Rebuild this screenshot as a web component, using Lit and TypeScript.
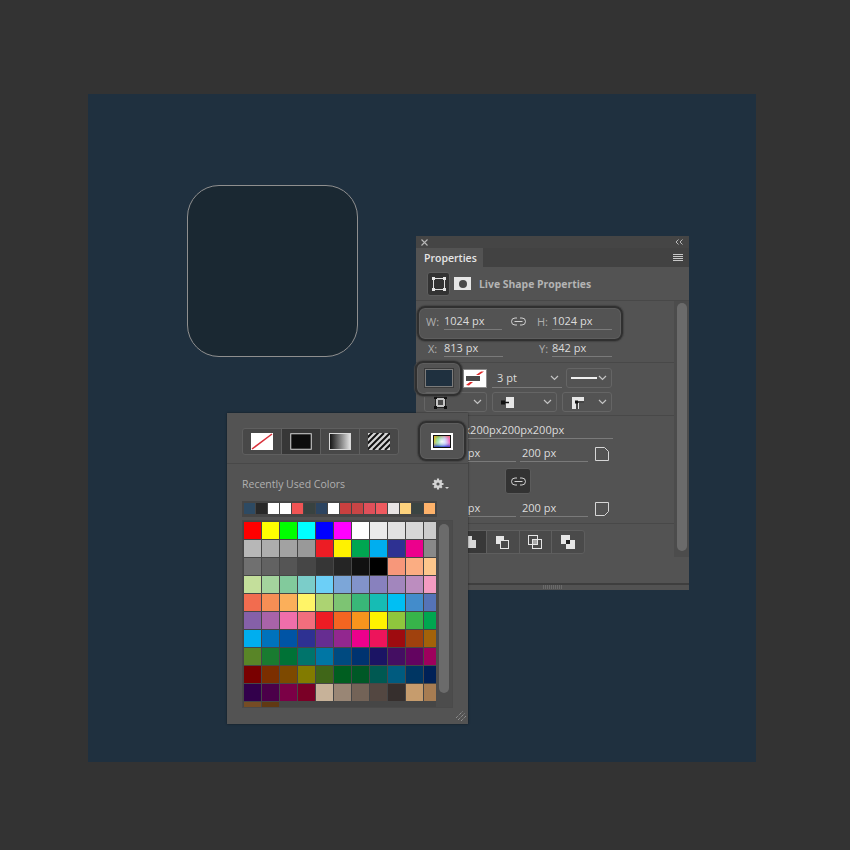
import { LitElement, html, css, svg } from "lit";
import { customElement } from "lit/decorators.js";

const RECENT = ["#2d4a63","#282828","#ffffff","#ffffff","#f05454","#384240","#2c4460","#ffffff","#c9403f","#c84545","#e0505a","#ef5a5f","#e8e4e4","#fdd27d","#3a4442","#feb26a"];
const GRID = [
"#ff0000 #ffff00 #00ff00 #00ffff #0000ff #ff00ff #ffffff #ebebeb #e1e1e1 #d7d7d7 #cccccc",
"#b7b7b7 #adadad #a2a2a2 #999999 #ed1c24 #fff200 #00a651 #00aeef #2e3192 #ec008c #898989",
"#707070 #626262 #555555 #464646 #363636 #252525 #111111 #000000 #f7977a #fbad82 #fdc68c",
"#c4df9b #a4d49d #82ca9c #7bcdc9 #6ccff7 #7ca6d8 #8293ca #8881be #a286bd #bc8dbf #f49bc1",
"#f26c4f #f68e55 #fbaf5a #fff467 #acd372 #7dc473 #39b778 #16bcb4 #00bff3 #438ccb #5573b7",
"#8560a8 #a863a8 #f06eaa #f26e7d #ed1c24 #f36521 #f7941d #fff200 #8fc63d #37b44a #00a650",
"#00aeef #0072bc #0054a5 #2e3192 #662d91 #92278f #ec008c #ed145b #9e0b0f #a0410d #a36209",
"#598527 #197b30 #007236 #00746b #0076a4 #004a80 #003370 #1b1464 #440e62 #630460 #9e005d",
"#790000 #7b2e00 #7d4900 #827b00 #406618 #005e20 #005826 #005952 #005b7f #003663 #002157",
"#32004b #4b0049 #7b0046 #7a0026 #c7b299 #998675 #736357 #534741 #362f2d #c69c6d #a67c52",
"#754c24 #603913",
].join(" ").split(" ");

const chevron = html`<svg class="chev" width="9" height="6" viewBox="0 0 9 6"><path d="M1 1l3.5 3.5L8 1" fill="none" stroke="#c4c4c4" stroke-width="1.2"/></svg>`;
const link = html`<svg width="15" height="9" viewBox="0 0 15 9"><g fill="none" stroke="#d0d0d0" stroke-width="1"><path d="M6 1H4a3.4 3.4 0 0 0 0 7h2M9 1h2a3.4 3.4 0 0 1 0 7H9"/><path d="M3.500 4.500h8"/></g></svg>`;

@customElement("app-root")
export class AppRoot extends LitElement {
  static styles = css`
    :host { display: block; width: 850px; height: 850px; background: #333333; font-family: "Open Sans", "Liberation Sans", sans-serif; font-size: 11px; color: #d4d4d4; overflow: hidden; }
    .stage { box-sizing: border-box; width: 850px; height: 850px; padding: 94px 94px 88px 88px; }
    .canvas { position: relative; width: 668px; height: 668px; background: #1f303f; }
    .shape { position: absolute; left: 99px; top: 91px; width: 171px; height: 172px; box-sizing: border-box; border: 1px solid #8f8f8f; border-radius: 32px; background: #1a2832; }

    .props { position: absolute; left: 328px; top: 142px; width: 273px; height: 354px; background: #535353; display: flex; flex-direction: column; }
    .title { height: 12px; flex: none; background: #454545; display: flex; align-items: center; justify-content: space-between; padding: 0 6px 0 5px; }
    .tabs { height: 19px; flex: none; background: #424242; display: flex; justify-content: space-between; align-items: center; padding-right: 6px; }
    .tab { width: 67px; height: 19px; box-sizing: border-box; padding-left: 8px; background: #535353; color: #e6e6e6; font-weight: 600; font-size: 10.500px; line-height: 20px; }
    .menu { display: flex; flex-direction: column; gap: 1px; width: 10px; }
    .menu i { display: block; height: 1px; background: #c8c8c8; }
    .head { height: 34px; flex: none; box-sizing: border-box; border-bottom: 1px solid #484848; display: flex; align-items: center; padding: 0 0 0 11px; gap: 4px; }
    .head-btn { width: 23px; height: 24px; box-sizing: border-box; background: #333; border: 1px solid #5e5e5e; border-radius: 3px; display: flex; align-items: center; justify-content: center; }
    .mask { width: 17px; height: 13px; background: #e6e6e6; display: flex; align-items: center; justify-content: center; }
    .mask i { width: 8px; height: 8px; border-radius: 50%; background: #4a4a4a; display: block; }
    .head b { margin-left: 4px; font-weight: 700; color: #b4b4b4; font-size: 10.400px; }
    .body { flex: 1; display: flex; min-height: 0; }
    .content { width: 258px; flex: none; display: flex; flex-direction: column; }
    .track { width: 15px; height: 256px; flex: none; background: #4c4c4c; box-sizing: border-box; padding: 2px 2px 0 3px; }
    .track i { display: block; width: 10px; height: 248px; border-radius: 5px; background: #6b6b6b; }
    .foot { height: 7px; flex: none; background: #525252; border-top: 2px solid #3e3e3e; box-sizing: border-box; display: flex; justify-content: center; }
    .grip { width: 19px; height: 4px; background: repeating-linear-gradient(90deg, #6a6a6a 0 1px, transparent 1px 2px); }

    .sec { box-sizing: border-box; border-bottom: 1px solid #484848; position: relative; }
    .s1 { height: 62px; padding: 12px 0 0 10px; }
    .s2 { height: 53px; padding: 5px 0 0 8px; }
    .s3 { height: 108px; padding: 6px 0 0 8px; position: relative; }
    .s4 { padding: 6px 0 0 37px; border: 0; }
    .row { display: flex; align-items: center; }
    .lbl { color: #aeaeae; width: 18px; flex: none; font-size: 11px; }
    .val { box-sizing: border-box; height: 17px; line-height: 15px; border-bottom: 1px solid #7a7a7a; color: #dcdcdc; font-size: 11px; flex: none; }
    .wh { position: relative; height: 17px; }
    .w1 { width: 58px; }
    .w2 { width: 60px; }
    .w3 { width: 59px; }
    .gap-link { width: 35px; flex: none; display: flex; justify-content: center; padding-right: 3px; box-sizing: border-box; }
    .lbl-h { width: 15px; }
    .xy { margin-top: 10px; padding-left: 2px; }
    .xy .lbl { width: 16px; }
    .xy .spacer { width: 34px; flex: none; }
    .xy .lbl-y { width: 13px; padding-left: 2px; }
    .ring { position: absolute; box-sizing: border-box; border: 2px solid #303030; border-radius: 8px; box-shadow: inset 0 0 0 1px #5e5e5e, 0 0 1px 1px #444; pointer-events: none; }
    .r-wh { left: -9px; top: -7px; width: 206px; height: 35px; }
    .r-fill { left: -9px; top: -7px; width: 47px; height: 35px; }
    .stroke-row { position: relative; display: flex; align-items: center; height: 20px; }
    .fill-sw { width: 30px; height: 20px; box-sizing: border-box; border: 2px solid #7b7b7b; background: #1f303f; flex: none; outline: 1px solid #3a3a3a; outline-offset: -1px; }
    .stroke-sw { margin-left: 9px; width: 24px; height: 19px; flex: none; display: block; }
    .sel-pt { margin-left: 5px; width: 70px; height: 19px; flex: none; box-sizing: border-box; border-bottom: 1px solid #7a7a7a; padding: 0 3px 0 5px; display: flex; justify-content: space-between; align-items: center; font-size: 11px; color: #dcdcdc; }
    .sel { box-sizing: border-box; border: 1px solid #656565; border-radius: 3px; height: 20px; display: flex; align-items: center; justify-content: space-between; padding: 0 4px; flex: none; }
    .sel-line { margin-left: 4px; width: 46px; }
    .line { display: block; width: 26px; height: 2px; background: #f0f0f0; }
    .row3 { display: flex; gap: 5px; margin-top: 4px; }
    .a { width: 63px; padding-left: 9px; }
    .b { width: 65px; padding-left: 8px; }
    .c { width: 50px; padding-left: 9px; }

    .radius { width: 189px; height: 17px; line-height: 15px; padding-left: 9px; overflow: hidden; white-space: nowrap; border-bottom: 1px solid #7a7a7a; box-sizing: border-box; color: #dcdcdc; }
    .corners { display: grid; grid-template-columns: 72px 68px 21px; column-gap: 4px; align-items: end; margin: 6px 0 0 20px; }
    .corners .val { padding-left: 2px; }
    .corner { margin-left: 3px; margin-bottom: 1px; display: block; }
    .link-row { height: 26px; margin-top: 6px; padding-left: 81px; }
    .link-btn { width: 26px; height: 26px; box-sizing: border-box; background: #333; border: 1px solid #5c5c5c; border-radius: 3px; display: flex; align-items: center; justify-content: center; }
    .ops { display: flex; width: 132px; height: 24px; box-sizing: border-box; border: 1px solid #5e5e5e; border-radius: 3px; background: #4a4a4a; }
    .op { flex: 1; display: flex; align-items: center; justify-content: center; border-left: 1px solid #5e5e5e; }
    .op:first-child { border-left: 0; background: #383838; }

    .colors { position: absolute; left: 139px; top: 319px; width: 241px; height: 311px; background: #535353; box-shadow: 0 0 2px rgba(0,0,0,.5); box-sizing: border-box; }
    .c-top { height: 51px; box-sizing: border-box; border-bottom: 1px solid #484848; padding: 15px 0 0 15px; display: flex; align-items: flex-start; position: relative; }
    .seg { display: flex; width: 157px; height: 27px; box-sizing: border-box; border: 1px solid #5f5f5f; border-radius: 3px; background: #484848; }
    .seg span { flex: 1; display: flex; align-items: center; justify-content: center; border-left: 1px solid #5f5f5f; }
    .seg span:first-child { border-left: 0; }
    .seg .on { background: #373737; }
    .picker { position: absolute; left: 191px; top: 8px; width: 48px; height: 40px; box-sizing: border-box; border: 2px solid #303030; border-radius: 8px; box-shadow: inset 0 0 0 1px #5e5e5e, 0 0 1px 1px #444; display: flex; align-items: center; justify-content: center; }
    .c-h { display: flex; justify-content: space-between; align-items: center; height: 16px; margin-top: 12px; padding: 0 19px 0 15px; color: #b0b0b0; font-size: 10.500px; }
    .strip { margin: 9px 0 0 15px; width: 195px; height: 16px; box-sizing: border-box; background: #454545; padding: 2px 0 0 2px; display: grid; grid-template-columns: repeat(16, 11px); column-gap: 1px; grid-auto-rows: 11px; overflow: hidden; }
    .wells { margin: 3px 0 0 15px; width: 211px; height: 188px; background: #464646; display: flex; box-sizing: border-box; border: 1px solid #4a4a4a; }
    .well-grid { width: 193px; height: 186px; overflow: hidden; padding: 1px 0 0 1px; display: grid; grid-template-columns: repeat(11, 17px); grid-auto-rows: 17px; gap: 1px; flex: none; box-sizing: border-box; background: #464646; }
    .well-grid i { display: block; }
    .well-bar { flex: 1; padding: 3px 0 0 3px; background: #4c4c4c; }
    .well-bar i { display: block; width: 10px; height: 169px; border-radius: 5px; background: #6b6b6b; }
    .rs { position: absolute; right: 1px; bottom: 2px; display: block; }
  `;

  render() {
    return html`<div class="stage"><div class="canvas">
      <div class="shape"></div>
      ${this.props()}
      ${this.colors()}
    </div></div>`;
  }

  private props() {
    return html`<div class="props">
      <div class="title">
        <svg width="7" height="7" viewBox="0 0 7 7"><path d="M.5.500l6 6M6.500.500l-6 6" stroke="#b8b8b8" stroke-width="1.1"/></svg>
        <svg width="8" height="6" viewBox="0 0 8 6"><path d="M3.500.500L1 3l2.500 2.500M7.500.500L5 3l2.500 2.500" fill="none" stroke="#b8b8b8"/></svg>
      </div>
      <div class="tabs"><div class="tab">Properties</div><div class="menu"><i></i><i></i><i></i><i></i></div></div>
      <div class="head">
        <div class="head-btn"><svg width="14" height="14" viewBox="0 0 14 14"><rect x="1.500" y="1.500" width="11" height="11" fill="none" stroke="#e0e0e0"/><g fill="#e6e6e6"><rect x="0" y="0" width="3" height="3"/><rect x="11" y="0" width="3" height="3"/><rect x="0" y="11" width="3" height="3"/><rect x="11" y="11" width="3" height="3"/></g></svg></div>
        <div class="mask"><i></i></div>
        <b>Live Shape Properties</b>
      </div>
      <div class="body">
        <div class="content">
          <div class="sec s1">
            <div class="row wh">
              <div class="ring r-wh"></div>
              <span class="lbl">W:</span><span class="val w1">1024 px</span>
              <span class="gap-link">${link}</span>
              <span class="lbl lbl-h">H:</span><span class="val w2">1024 px</span>
            </div>
            <div class="row xy">
              <span class="lbl">X:</span><span class="val w3">813 px</span>
              <span class="spacer"></span>
              <span class="lbl lbl-y">Y:</span><span class="val w2">842 px</span>
            </div>
          </div>
          <div class="sec s2">
            <div class="stroke-row">
              <div class="ring r-fill"></div>
              <span class="fill-sw"></span>
              <svg class="stroke-sw" viewBox="0 0 24 19"><rect x=".5" y=".5" width="23" height="18" fill="#fff" stroke="#8c8c8c"/><path d="M13 6l5-3.500h3L16 6zM3 16l4-3h3l-4 3.500z" fill="#e02b2b"/><rect x="3" y="7" width="14" height="5" fill="#4a4a4a"/></svg>
              <span class="sel-pt"><span>3 pt</span>${chevron}</span>
              <span class="sel sel-line"><i class="line"></i>${chevron}</span>
            </div>
            <div class="row3">
              <span class="sel a"><svg width="13" height="13" viewBox="0 0 13 13"><rect x="1.500" y="1.500" width="10" height="10" fill="#c4c4c4" stroke="#222"/><rect x="4" y="4" width="5" height="5" fill="#4a4a4a"/><g fill="#111"><rect x="0" y="0" width="3" height="3"/><rect x="10" y="0" width="3" height="3"/><rect x="0" y="10" width="3" height="3"/><rect x="10" y="10" width="3" height="3"/></g></svg>${chevron}</span>
              <span class="sel b"><svg width="13" height="13" viewBox="0 0 13 13"><path d="M5 1h8v11H5z" fill="#e6e6e6"/><path d="M1 6.500h7" stroke="#111" stroke-width="1.500"/><rect x="0" y="4.500" width="4" height="4" fill="#111"/></svg>${chevron}</span>
              <span class="sel c"><svg width="13" height="13" viewBox="0 0 13 13"><path d="M0 1h12v6H7v6H0z" fill="#e6e6e6"/><path d="M5 6h7M5 6v7" stroke="#111" stroke-width="1.500"/><rect x="3" y="4.500" width="3" height="3" fill="#111"/></svg>${chevron}</span>
            </div>
          </div>
          <div class="sec s3">
            <div class="radius">200pxx200px200px200px</div>
            <div class="corners">
              <span class="val">200 px</span><span class="val">200 px</span>
              <svg class="corner" width="14" height="14" viewBox="0 0 14 14"><path d="M.5.500h9l4 4v9H.500z" fill="none" stroke="#d6d6d6"/></svg>
            </div>
            <div class="link-row"><div class="link-btn">${link}</div></div>
            <div class="corners">
              <span class="val">200 px</span><span class="val">200 px</span>
              <svg class="corner" width="14" height="14" viewBox="0 0 14 14"><path d="M.5.500h13v9l-4 4h-9z" fill="none" stroke="#d6d6d6"/></svg>
            </div>
          </div>
          <div class="sec s4">
            <div class="ops">
              <span class="op"><svg width="14" height="14" viewBox="0 0 14 14"><path d="M1 1h8v4h4v8H1z" fill="#d8d8d8"/></svg></span>
              <span class="op"><svg width="13" height="13" viewBox="0 0 13 13"><rect x="0" y="0" width="8" height="8" fill="#e6e6e6"/><rect x="4.500" y="4.500" width="8" height="8" fill="#4a4a4a" stroke="#e6e6e6"/></svg></span>
              <span class="op"><svg width="14" height="14" viewBox="0 0 14 14"><rect x=".5" y=".5" width="9" height="9" fill="none" stroke="#e6e6e6"/><rect x="4.500" y="4.500" width="9" height="9" fill="none" stroke="#e6e6e6"/><rect x="5" y="5" width="4" height="4" fill="#a8a8a8"/></svg></span>
              <span class="op"><svg width="14" height="14" viewBox="0 0 14 14"><rect x="0" y="0" width="9" height="9" fill="#e6e6e6"/><rect x="5" y="5" width="9" height="9" fill="#e6e6e6"/><rect x="5" y="5" width="4" height="4" fill="#222"/></svg></span>
            </div>
          </div>
        </div>
        <div class="track"><i></i></div>
      </div>
      <div class="foot"><span class="grip"></span></div>
    </div>`;
  }

  private colors() {
    return html`<div class="colors">
      <div class="c-top">
        <div class="seg">
          <span><svg width="22" height="17" viewBox="0 0 22 17"><rect width="22" height="17" fill="#fff"/><path d="M1 16L21 1" stroke="#d9303a" stroke-width="1.500"/></svg></span>
          <span class="on"><svg width="22" height="17" viewBox="0 0 22 17"><rect x=".75" y=".75" width="20.500" height="15.500" fill="#0c0c0c" stroke="#d8d8d8" stroke-width="1"/></svg></span>
          <span><svg width="22" height="17" viewBox="0 0 22 17"><defs><linearGradient id="g1"><stop offset="0" stop-color="#111"/><stop offset="1" stop-color="#e4e4e4"/></linearGradient></defs><rect x=".5" y=".5" width="21" height="16" fill="url(#g1)" stroke="#d8d8d8"/></svg></span>
          <span><svg width="22" height="17" viewBox="0 0 22 17"><rect width="22" height="17" fill="#d4d4d4"/><path d="M-2 6L5-1M-2 12L11-1M-1 17L16 0M5 17L22 0M11 17L22 6M17 17L24 10" stroke="#111" stroke-width="2"/></svg></span>
        </div>
        <div class="picker"><svg width="22" height="17" viewBox="0 0 22 17"><defs><linearGradient id="g2"><stop offset="0" stop-color="#e8c020"/><stop offset=".3" stop-color="#40d070"/><stop offset=".65" stop-color="#a0b0ff"/><stop offset="1" stop-color="#ff4aa8"/></linearGradient><linearGradient id="g3" x2="0" y2="1"><stop offset="0" stop-color="#ff8020" stop-opacity=".45"/><stop offset=".45" stop-color="#fff" stop-opacity="0"/><stop offset="1" stop-color="#2030d0" stop-opacity=".85"/></linearGradient><radialGradient id="g4"><stop offset="0" stop-color="#fff" stop-opacity=".95"/><stop offset="1" stop-color="#fff" stop-opacity="0"/></radialGradient></defs><rect width="22" height="17" fill="#fff"/><rect x="2.500" y="2.500" width="17" height="12" fill="url(#g2)" stroke="#111"/><rect x="3" y="3" width="16" height="11" fill="url(#g3)"/><rect x="3" y="3" width="16" height="11" fill="url(#g4)"/></svg></div>
      </div>
      <div class="c-h"><span>Recently Used Colors</span>
        <svg width="17" height="13" viewBox="0 0 17 13"><circle cx="6" cy="6" r="4" fill="#d4d4d4"/><path d="M6 .5v11M.5 6h11M2.200 2.200l7.600 7.600M9.800 2.200l-7.600 7.600" stroke="#d4d4d4" stroke-width="2.200"/><circle cx="6" cy="6" r="1.600" fill="#535353"/><path d="M13 9h4l-2 2z" fill="#d4d4d4"/></svg>
      </div>
      <div class="strip">${RECENT.map((c) => html`<i style="background:${c}"></i>`)}</div>
      <div class="wells">
        <div class="well-grid">${GRID.map((c) => html`<i style="background:${c}"></i>`)}</div>
        <div class="well-bar"><i></i></div>
      </div>
      <svg class="rs" width="12" height="12" viewBox="0 0 12 12">${svg`<g stroke="#a8a8a8" stroke-width="1" stroke-dasharray="1 1"><path d="M1 8L8 1M3 10l7-7M6 11l5-5"/></g>`}</svg>
    </div>`;
  }
}
